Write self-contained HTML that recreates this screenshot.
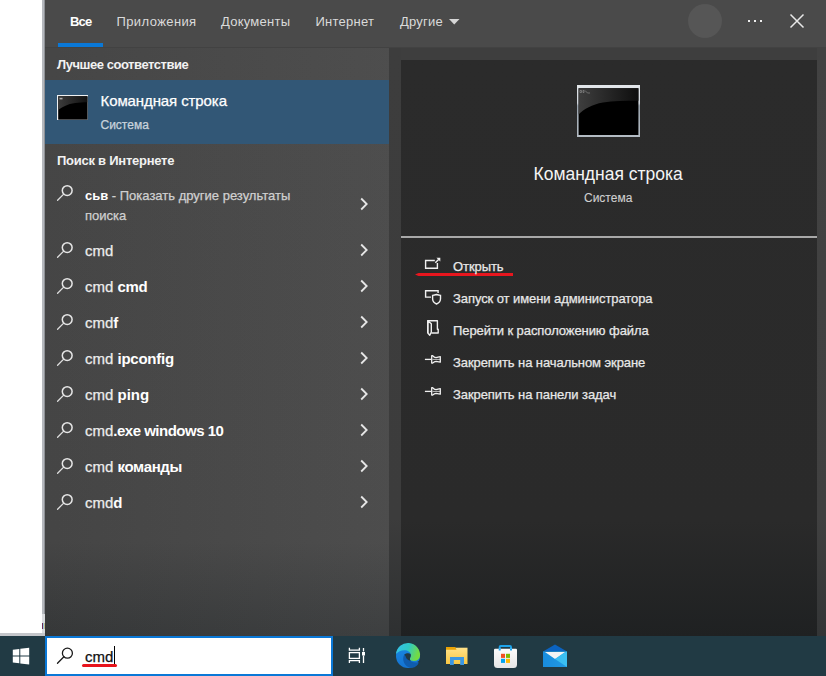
<!DOCTYPE html>
<html><head><meta charset="utf-8">
<style>
*{margin:0;padding:0;box-sizing:border-box}
html,body{width:826px;height:676px;overflow:hidden;background:#fff;font-family:"Liberation Sans",sans-serif}
.a{position:absolute}
.t{position:absolute;white-space:nowrap;line-height:1;-webkit-text-stroke:0.25px currentColor}
#wl{left:0;top:0;width:42px;height:633px;background:#fff}
#wb{left:42px;top:0;width:3px;height:636px;background:linear-gradient(90deg,#b6b9be 0,#b6b9be 2px,#8e9196 2px)}
#wbb{left:0;top:633px;width:45px;height:3px;background:#c4c6ca}
#panel{left:45px;top:0;width:781px;height:636px;background:linear-gradient(#4a4a4a,#3a3b3b)}
#tabs{left:45px;top:0;width:781px;height:47px;background:#4a4a4a}
#tabline{left:45px;top:47px;width:781px;height:1px;background:#424242}
#leftcol{left:45px;top:48px;width:344px;height:588px;background:linear-gradient(90deg,rgba(0,0,0,0.03),rgba(255,255,255,0.03)),linear-gradient(#484848 0%,#474747 84%,#37393a 100%)}
#gutter{left:389px;top:48px;width:12px;height:588px;background:linear-gradient(#3d3d3d 0%,#3c3c3c 80%,#2e3031 100%)}
#rstrip{left:817px;top:48px;width:9px;height:588px;background:linear-gradient(#424242 0%,#404040 80%,#333536 100%)}
#rgut{left:401px;top:48px;width:416px;height:12px;background:#3e3e3e}
#preview{left:401px;top:60px;width:416px;height:576px;background:linear-gradient(#2b2b2b 0%,#2a2a2a 80%,#1f2122 100%)}
#taskbar{left:0;top:636px;width:826px;height:40px;background:#213a44}
#sel{left:45px;top:80px;width:344px;height:64px;background:#325776}
.tab{font-size:13px;color:#dadada;top:15px;-webkit-text-stroke:0}
.hdr{font-size:13px;font-weight:bold;color:#f2f2f2}
.it{font-size:15px;color:#ececec;left:85px}
.it b{font-weight:bold;color:#fff}
b,.hdr{-webkit-text-stroke:0}
.act{font-size:13px;color:#e8e8e8;left:453px;letter-spacing:-0.08px}
</style></head><body>
<div class="a" id="wl"></div>
<div class="a" id="wb"></div>
<div class="a" id="wbb"></div>
<div class="a" style="left:42px;top:614px;width:3px;height:19px;background:#d9dbde"></div>
<div class="a" style="left:42px;top:623px;width:1px;height:6px;background:#6a2a55"></div>
<div class="a" style="left:43px;top:623px;width:1px;height:6px;background:#9cc8e0"></div>
<div class="a" style="left:44px;top:623px;width:1px;height:6px;background:#c8c090"></div>
<div class="a" id="panel"></div>
<div class="a" id="tabs"></div>
<div class="a" id="tabline"></div>
<div class="a" id="leftcol"></div>
<div class="a" id="gutter"></div>
<div class="a" id="rstrip"></div>
<div class="a" id="rgut"></div>
<div class="a" id="preview"></div>
<div class="a" id="taskbar"></div>
<div class="a" id="sel"></div>

<!-- tabs -->
<div class="t tab" style="left:70px;font-weight:bold;color:#fff;letter-spacing:-0.8px;-webkit-text-stroke:0">Все</div>
<div class="t tab" style="left:116.5px;letter-spacing:0.4px">Приложения</div>
<div class="t tab" style="left:221px;letter-spacing:0.25px">Документы</div>
<div class="t tab" style="left:315.5px;letter-spacing:0.25px">Интернет</div>
<div class="t tab" style="left:400px;letter-spacing:0.2px">Другие</div>
<svg class="a" style="left:449px;top:19px" width="11" height="6"><path d="M0 0H10.5L5.25 5.5Z" fill="#d6d6d6"/></svg>
<div class="a" style="left:58px;top:43px;width:45px;height:4px;background:#0a78d7"></div>

<svg class="a" style="left:688px;top:4px" width="34" height="34"><circle cx="17" cy="17" r="17" fill="#565656"/></svg>
<div class="a" style="left:748px;top:20px;width:2px;height:2px;background:#eee"></div>
<div class="a" style="left:754px;top:20px;width:2px;height:2px;background:#eee"></div>
<div class="a" style="left:760px;top:20px;width:2px;height:2px;background:#eee"></div>
<svg class="a" style="left:789px;top:13px" width="16" height="16"><path d="M1.5 1.5L14.5 14.5M14.5 1.5L1.5 14.5" stroke="#e8e8e8" stroke-width="1.5"/></svg>

<!-- left column -->
<div class="t hdr" style="left:57px;top:58px;letter-spacing:-0.45px">Лучшее соответствие</div>
<svg class="a" style="left:57px;top:95px" width="31" height="25"><defs><linearGradient id="g1" x1="0" x2="1" y1="0" y2="0"><stop offset="0" stop-color="#3c3c3c"/><stop offset="1" stop-color="#111"/></linearGradient></defs><rect width="31" height="25" fill="#6a6e72"/><rect width="31" height="1.3" fill="#eef0f2"/><rect width="1.3" height="25" fill="#eef0f2"/><rect x="1.3" y="1.3" width="28.9" height="23" fill="#000"/><path d="M1.3 1.3H30.2V7.3C22 7.3 14 8 8 11C5 12.3 3 13.5 1.3 15Z" fill="url(#g1)"/><rect x="2.5" y="2.8" width="3" height="1.6" fill="#aaa"/></svg>
<div class="t" style="left:100.5px;top:93px;font-size:15px;color:#fff;letter-spacing:-0.1px">Командная строка</div>
<div class="t" style="left:100.5px;top:118.5px;font-size:12px;color:#c9d3dc">Система</div>

<div class="t hdr" style="left:57px;top:154px;letter-spacing:-0.25px">Поиск в Интернете</div>
<div class="t" style="left:85px;top:189px;font-size:13px;color:#d0d0d0"><b style="color:#fff">сьв</b> - Показать другие результаты</div>
<div class="t" style="left:85px;top:209px;font-size:13px;color:#d0d0d0">поиска</div>

<div class="t it" style="top:243px">cmd</div>
<div class="t it" style="top:279px">cmd <b style="letter-spacing:-0.3px">cmd</b></div>
<div class="t it" style="top:315px">cmd<b>f</b></div>
<div class="t it" style="top:351px">cmd <b style="letter-spacing:-0.25px">ipconfig</b></div>
<div class="t it" style="top:387px">cmd <b>ping</b></div>
<div class="t it" style="top:423px">cmd<b style="letter-spacing:-0.5px">.exe windows 10</b></div>
<div class="t it" style="top:459px">cmd <b style="letter-spacing:-0.35px">команды</b></div>
<div class="t it" style="top:495px">cmd<b>d</b></div>

<svg class="a" style="left:55px;top:184.3px" width="20" height="18"><circle cx="12.2" cy="6.6" r="4.9" fill="none" stroke="#e6e6e6" stroke-width="1.5"/><path d="M8.7 10.1L2.6 16.2" stroke="#dedede" stroke-width="1.3" stroke-linecap="round"/></svg>
<svg class="a" style="left:358px;top:196px" width="12" height="16"><path d="M3.2 2.5L8.7 8L3.2 13.5" fill="none" stroke="#e6e6e6" stroke-width="1.8"/></svg>
<svg class="a" style="left:55px;top:240.7px" width="20" height="18"><circle cx="12.2" cy="6.6" r="4.9" fill="none" stroke="#e6e6e6" stroke-width="1.5"/><path d="M8.7 10.1L2.6 16.2" stroke="#dedede" stroke-width="1.3" stroke-linecap="round"/></svg>
<svg class="a" style="left:358px;top:242px" width="12" height="16"><path d="M3.2 2.5L8.7 8L3.2 13.5" fill="none" stroke="#e6e6e6" stroke-width="1.8"/></svg>
<svg class="a" style="left:55px;top:276.7px" width="20" height="18"><circle cx="12.2" cy="6.6" r="4.9" fill="none" stroke="#e6e6e6" stroke-width="1.5"/><path d="M8.7 10.1L2.6 16.2" stroke="#dedede" stroke-width="1.3" stroke-linecap="round"/></svg>
<svg class="a" style="left:358px;top:278px" width="12" height="16"><path d="M3.2 2.5L8.7 8L3.2 13.5" fill="none" stroke="#e6e6e6" stroke-width="1.8"/></svg>
<svg class="a" style="left:55px;top:312.7px" width="20" height="18"><circle cx="12.2" cy="6.6" r="4.9" fill="none" stroke="#e6e6e6" stroke-width="1.5"/><path d="M8.7 10.1L2.6 16.2" stroke="#dedede" stroke-width="1.3" stroke-linecap="round"/></svg>
<svg class="a" style="left:358px;top:314px" width="12" height="16"><path d="M3.2 2.5L8.7 8L3.2 13.5" fill="none" stroke="#e6e6e6" stroke-width="1.8"/></svg>
<svg class="a" style="left:55px;top:348.7px" width="20" height="18"><circle cx="12.2" cy="6.6" r="4.9" fill="none" stroke="#e6e6e6" stroke-width="1.5"/><path d="M8.7 10.1L2.6 16.2" stroke="#dedede" stroke-width="1.3" stroke-linecap="round"/></svg>
<svg class="a" style="left:358px;top:350px" width="12" height="16"><path d="M3.2 2.5L8.7 8L3.2 13.5" fill="none" stroke="#e6e6e6" stroke-width="1.8"/></svg>
<svg class="a" style="left:55px;top:384.7px" width="20" height="18"><circle cx="12.2" cy="6.6" r="4.9" fill="none" stroke="#e6e6e6" stroke-width="1.5"/><path d="M8.7 10.1L2.6 16.2" stroke="#dedede" stroke-width="1.3" stroke-linecap="round"/></svg>
<svg class="a" style="left:358px;top:386px" width="12" height="16"><path d="M3.2 2.5L8.7 8L3.2 13.5" fill="none" stroke="#e6e6e6" stroke-width="1.8"/></svg>
<svg class="a" style="left:55px;top:420.7px" width="20" height="18"><circle cx="12.2" cy="6.6" r="4.9" fill="none" stroke="#e6e6e6" stroke-width="1.5"/><path d="M8.7 10.1L2.6 16.2" stroke="#dedede" stroke-width="1.3" stroke-linecap="round"/></svg>
<svg class="a" style="left:358px;top:422px" width="12" height="16"><path d="M3.2 2.5L8.7 8L3.2 13.5" fill="none" stroke="#e6e6e6" stroke-width="1.8"/></svg>
<svg class="a" style="left:55px;top:456.7px" width="20" height="18"><circle cx="12.2" cy="6.6" r="4.9" fill="none" stroke="#e6e6e6" stroke-width="1.5"/><path d="M8.7 10.1L2.6 16.2" stroke="#dedede" stroke-width="1.3" stroke-linecap="round"/></svg>
<svg class="a" style="left:358px;top:458px" width="12" height="16"><path d="M3.2 2.5L8.7 8L3.2 13.5" fill="none" stroke="#e6e6e6" stroke-width="1.8"/></svg>
<svg class="a" style="left:55px;top:492.7px" width="20" height="18"><circle cx="12.2" cy="6.6" r="4.9" fill="none" stroke="#e6e6e6" stroke-width="1.5"/><path d="M8.7 10.1L2.6 16.2" stroke="#dedede" stroke-width="1.3" stroke-linecap="round"/></svg>
<svg class="a" style="left:358px;top:494px" width="12" height="16"><path d="M3.2 2.5L8.7 8L3.2 13.5" fill="none" stroke="#e6e6e6" stroke-width="1.8"/></svg>
<!-- right panel -->
<svg class="a" style="left:577px;top:85px" width="63" height="52"><defs><linearGradient id="g2" x1="0" x2="1" y1="0" y2="0"><stop offset="0" stop-color="#3e3e3e"/><stop offset="1" stop-color="#0e0e0e"/></linearGradient><linearGradient id="g3" x1="0" x2="0" y1="0" y2="1"><stop offset="0" stop-color="#e4e8ec"/><stop offset="0.35" stop-color="#d0d6dc"/><stop offset="0.4" stop-color="#9aa4ae"/><stop offset="1" stop-color="#b4bcc4"/></linearGradient></defs><rect width="63" height="52" fill="url(#g3)"/><rect x="0.5" y="0" width="62" height="3.2" fill="#e2e6ea"/><rect x="1.6" y="3.2" width="59.8" height="46.8" fill="#000"/><path d="M1.6 3.2H61.4V15.8C48 15.8 36 15.8 26 17.5C15 19.5 7 24 1.6 29.5Z" fill="url(#g2)"/><path d="M3 5.5h1.5v2h-1.5zM6 5.5h1v2h-1zM8 5.5l2.5 2.5h2.5" fill="none" stroke="#888" stroke-width="0.7"/></svg>
<div class="t" style="left:533.5px;top:165.5px;font-size:17.5px;color:#f4f4f4;-webkit-text-stroke:0">Командная строка</div>
<div class="t" style="left:584px;top:192px;font-size:12px;color:#d0d0d0;-webkit-text-stroke:0.1px #d0d0d0">Система</div>
<div class="a" style="left:401px;top:236px;width:416px;height:2px;background:#a8a8a8"></div>

<svg class="a" style="left:413px;top:271px" width="104" height="8"><path d="M2 3.4L5.5 2H100V5H5.5Z" fill="#e8161e"/></svg>
<div class="t act" style="top:260px">Открыть</div>
<div class="t act" style="top:292px">Запуск от имени администратора</div>
<div class="t act" style="top:324px">Перейти к расположению файла</div>
<div class="t act" style="top:356px">Закрепить на начальном экране</div>
<div class="t act" style="top:388px">Закрепить на панели задач</div>


<svg class="a" style="left:420px;top:250px" width="26" height="26"><path d="M14.8 10.5H5.6V18.3H17.4V12.9" fill="none" stroke="#f0f0f0" stroke-width="1.4"/><path d="M15.3 12.7L18.8 9.2" stroke="#f0f0f0" stroke-width="1.4"/><path d="M20.3 7.7H16.4L20.3 11.6Z" fill="#f0f0f0"/></svg>
<svg class="a" style="left:420px;top:284px" width="26" height="26"><path d="M18.1 9V6.7H5.6V13.1H11" fill="none" stroke="#f0f0f0" stroke-width="1.4"/><path d="M12.6 11.4Q14.6 11.2 16.55 10.5Q18.5 11.2 20.5 11.4V14.8Q20.5 18.3 16.55 20Q12.6 18.3 12.6 14.8Z" fill="none" stroke="#f0f0f0" stroke-width="1.4"/></svg>
<svg class="a" style="left:420px;top:316px" width="26" height="26"><path d="M11.3 17H18.2V13.3H17.4V4.7H7.8V17" fill="none" stroke="#f0f0f0" stroke-width="1.4" stroke-linejoin="round"/><path d="M7.8 4.7L11.3 7.7V16L9.8 19.3L7.8 17Z" fill="none" stroke="#f0f0f0" stroke-width="1.4" stroke-linejoin="round"/></svg>
<svg class="a" style="left:420px;top:350px" width="26" height="26"><path d="M4.9 9.4H11" stroke="#f0f0f0" stroke-width="1.3"/><path d="M12.5 9.4H20" stroke="#bdbdbd" stroke-width="1"/><path d="M11.7 5.7H12.6C13.6 7 14.6 7.7 16 7.7L20.3 6.7V12.2L16 11.3C14.6 11.3 13.6 12 12.6 13.1H11.7Z" fill="none" stroke="#f0f0f0" stroke-width="1.3" stroke-linejoin="round"/></svg>
<svg class="a" style="left:420px;top:382px" width="26" height="26"><path d="M4.9 9.4H11" stroke="#f0f0f0" stroke-width="1.3"/><path d="M12.5 9.4H20" stroke="#bdbdbd" stroke-width="1"/><path d="M11.7 5.7H12.6C13.6 7 14.6 7.7 16 7.7L20.3 6.7V12.2L16 11.3C14.6 11.3 13.6 12 12.6 13.1H11.7Z" fill="none" stroke="#f0f0f0" stroke-width="1.3" stroke-linejoin="round"/></svg>
<!-- search box -->
<div class="a" style="left:45px;top:636px;width:288px;height:40px;background:#fff;border:2px solid #0a78d7"></div>
<svg class="a" style="left:55px;top:644px" width="24" height="24"><circle cx="12.4" cy="9.2" r="5" fill="none" stroke="#1a1a1a" stroke-width="1.3"/><path d="M8.9 12.7L2.5 19.3" stroke="#1a1a1a" stroke-width="1.3" stroke-linecap="round"/></svg>
<div class="t" style="left:85px;top:649px;font-size:15px;color:#111">cmd</div>
<div class="a" style="left:114px;top:646px;width:1px;height:19px;background:#000"></div>
<div class="a" style="left:82px;top:664px;width:35px;height:3px;background:#e8141c;border-radius:2px"></div>


<svg class="a" style="left:0;top:636px" width="826" height="40">
<g fill="#fff"><path d="M12.8 13.7L19.3 12.9V19.5H12.8Z"/><path d="M20.3 12.8L29.2 11.7V19.5H20.3Z"/><path d="M12.8 20.5H19.3V27.3L12.8 26.5Z"/><path d="M20.3 20.5H29.2V28.5L20.3 27.4Z"/></g>
<g fill="none" stroke="#fff" stroke-width="1.3"><path d="M349.4 11.7V14.2H359.4V11.7"/><rect x="349.4" y="16.6" width="10" height="5.8"/><path d="M349.4 27V24.6H359.4V27"/><path d="M363.5 12V15.5M363.5 19.5V27"/></g><rect x="362" y="16" width="3" height="3.5" fill="#fff"/>
<defs><linearGradient id="eg" x1="0" y1="0" x2="1" y2="0.3"><stop offset="0" stop-color="#35c1f1"/><stop offset="0.55" stop-color="#2fc9c4"/><stop offset="1" stop-color="#73db43"/></linearGradient>
<linearGradient id="eb" x1="0" y1="0" x2="0" y2="1"><stop offset="0" stop-color="#1a8ae2"/><stop offset="1" stop-color="#1473d2"/></linearGradient>
<linearGradient id="fy" x1="0" y1="0" x2="0" y2="1"><stop offset="0" stop-color="#ffe28a"/><stop offset="1" stop-color="#f9c743"/></linearGradient>
<linearGradient id="sb" x1="0" y1="0" x2="0" y2="1"><stop offset="0" stop-color="#fbfbfb"/><stop offset="1" stop-color="#e6e6e6"/></linearGradient>
<linearGradient id="mb" x1="0" y1="0" x2="1" y2="0"><stop offset="0" stop-color="#1b92e0"/><stop offset="1" stop-color="#33b6ef"/></linearGradient></defs>
<g transform="translate(390 4)"><circle cx="18" cy="16" r="12" fill="url(#eb)"/>
<path d="M6 14C8 11.5 11 10.2 14.2 10.2C18 10.2 20.9 12.3 20.9 15C20.9 17 19.9 17.6 19.9 19C19.9 20.2 21.5 20.9 24 20.9C27 20.9 29.6 19.5 30 16A12 12 0 0 0 6 14Z" fill="url(#eg)"/>
<path d="M14 15C13.1 16.8 13 19 13.5 21C14.5 25.2 18.5 28.1 22.3 27.8C25.4 27.5 27.9 25.3 28.9 22.2C26.5 22.8 23.5 22.6 21.5 21.5C19.6 20.5 19.2 18.8 19.8 17.5C20.3 16 19 14.2 17.5 14C16.2 13.8 14.8 14.2 14 15Z" fill="#0f5cae"/>
<path d="M20.9 15C20.9 17 19.9 17.6 19.9 19C19.9 20 20.5 20.6 21.3 21C18.8 20.6 16.6 19.4 16 17.6C15.6 16.3 15.2 15.2 14.2 14.8C15.5 13.6 17 13.2 18.3 13.3C19.8 13.5 20.9 14 20.9 15Z" fill="#213a44"/>
<path d="M30.2 19.5C29.5 20.6 28.5 21.6 26.5 22.1C27.3 22.2 28.2 22.3 29 22.2L30.2 21.5Z" fill="#213a44"/></g>
<g transform="translate(436 4)"><path d="M10 7.7H31.5V24H10Z" fill="url(#fy)"/><path d="M10 7H19.2L20.6 9.7H10Z" fill="#e9a306"/><path d="M14 25V17H28V25H24.2V20H17.8V25Z" fill="#3b97e3"/></g>
<g transform="translate(486 0)"><path d="M13.7 14.5V11Q13.7 9.9 14.8 9.9H23.9Q25 9.9 25 11V14.5" fill="none" stroke="#1ea4ec" stroke-width="2"/><path d="M8 13.6Q8 12.7 9 12.7H30Q31 12.7 31 13.6V28.5Q31 32 27.5 32H11.5Q8 32 8 28.5Z" fill="url(#sb)"/><path d="M12.7 12.7H14.7V14.5H12.7ZM24 12.7H26V14.5H24Z" fill="#1ea4ec"/><rect x="15" y="17.8" width="4" height="4.1" fill="#f25022"/><rect x="20" y="17.8" width="4" height="4.1" fill="#7fba00"/><rect x="15" y="22.8" width="4" height="4.1" fill="#00a4ef"/><rect x="20" y="22.8" width="4" height="4.1" fill="#ffb900"/></g>
<g transform="translate(536 0)"><path d="M7 15.4L19 8.6L31 15.4Z" fill="#0b63c1"/><path d="M7 15.4H31V31H7Z" fill="url(#mb)"/><path d="M9 16H29L19 23Z" fill="#f4f4f4"/><path d="M19 23L31 15.4V31Z" fill="#3fc3f3" opacity="0.8"/><path d="M7 15.4L31 31H7Z" fill="#1888dc" opacity="0.6"/></g>
</svg>
</body></html>
